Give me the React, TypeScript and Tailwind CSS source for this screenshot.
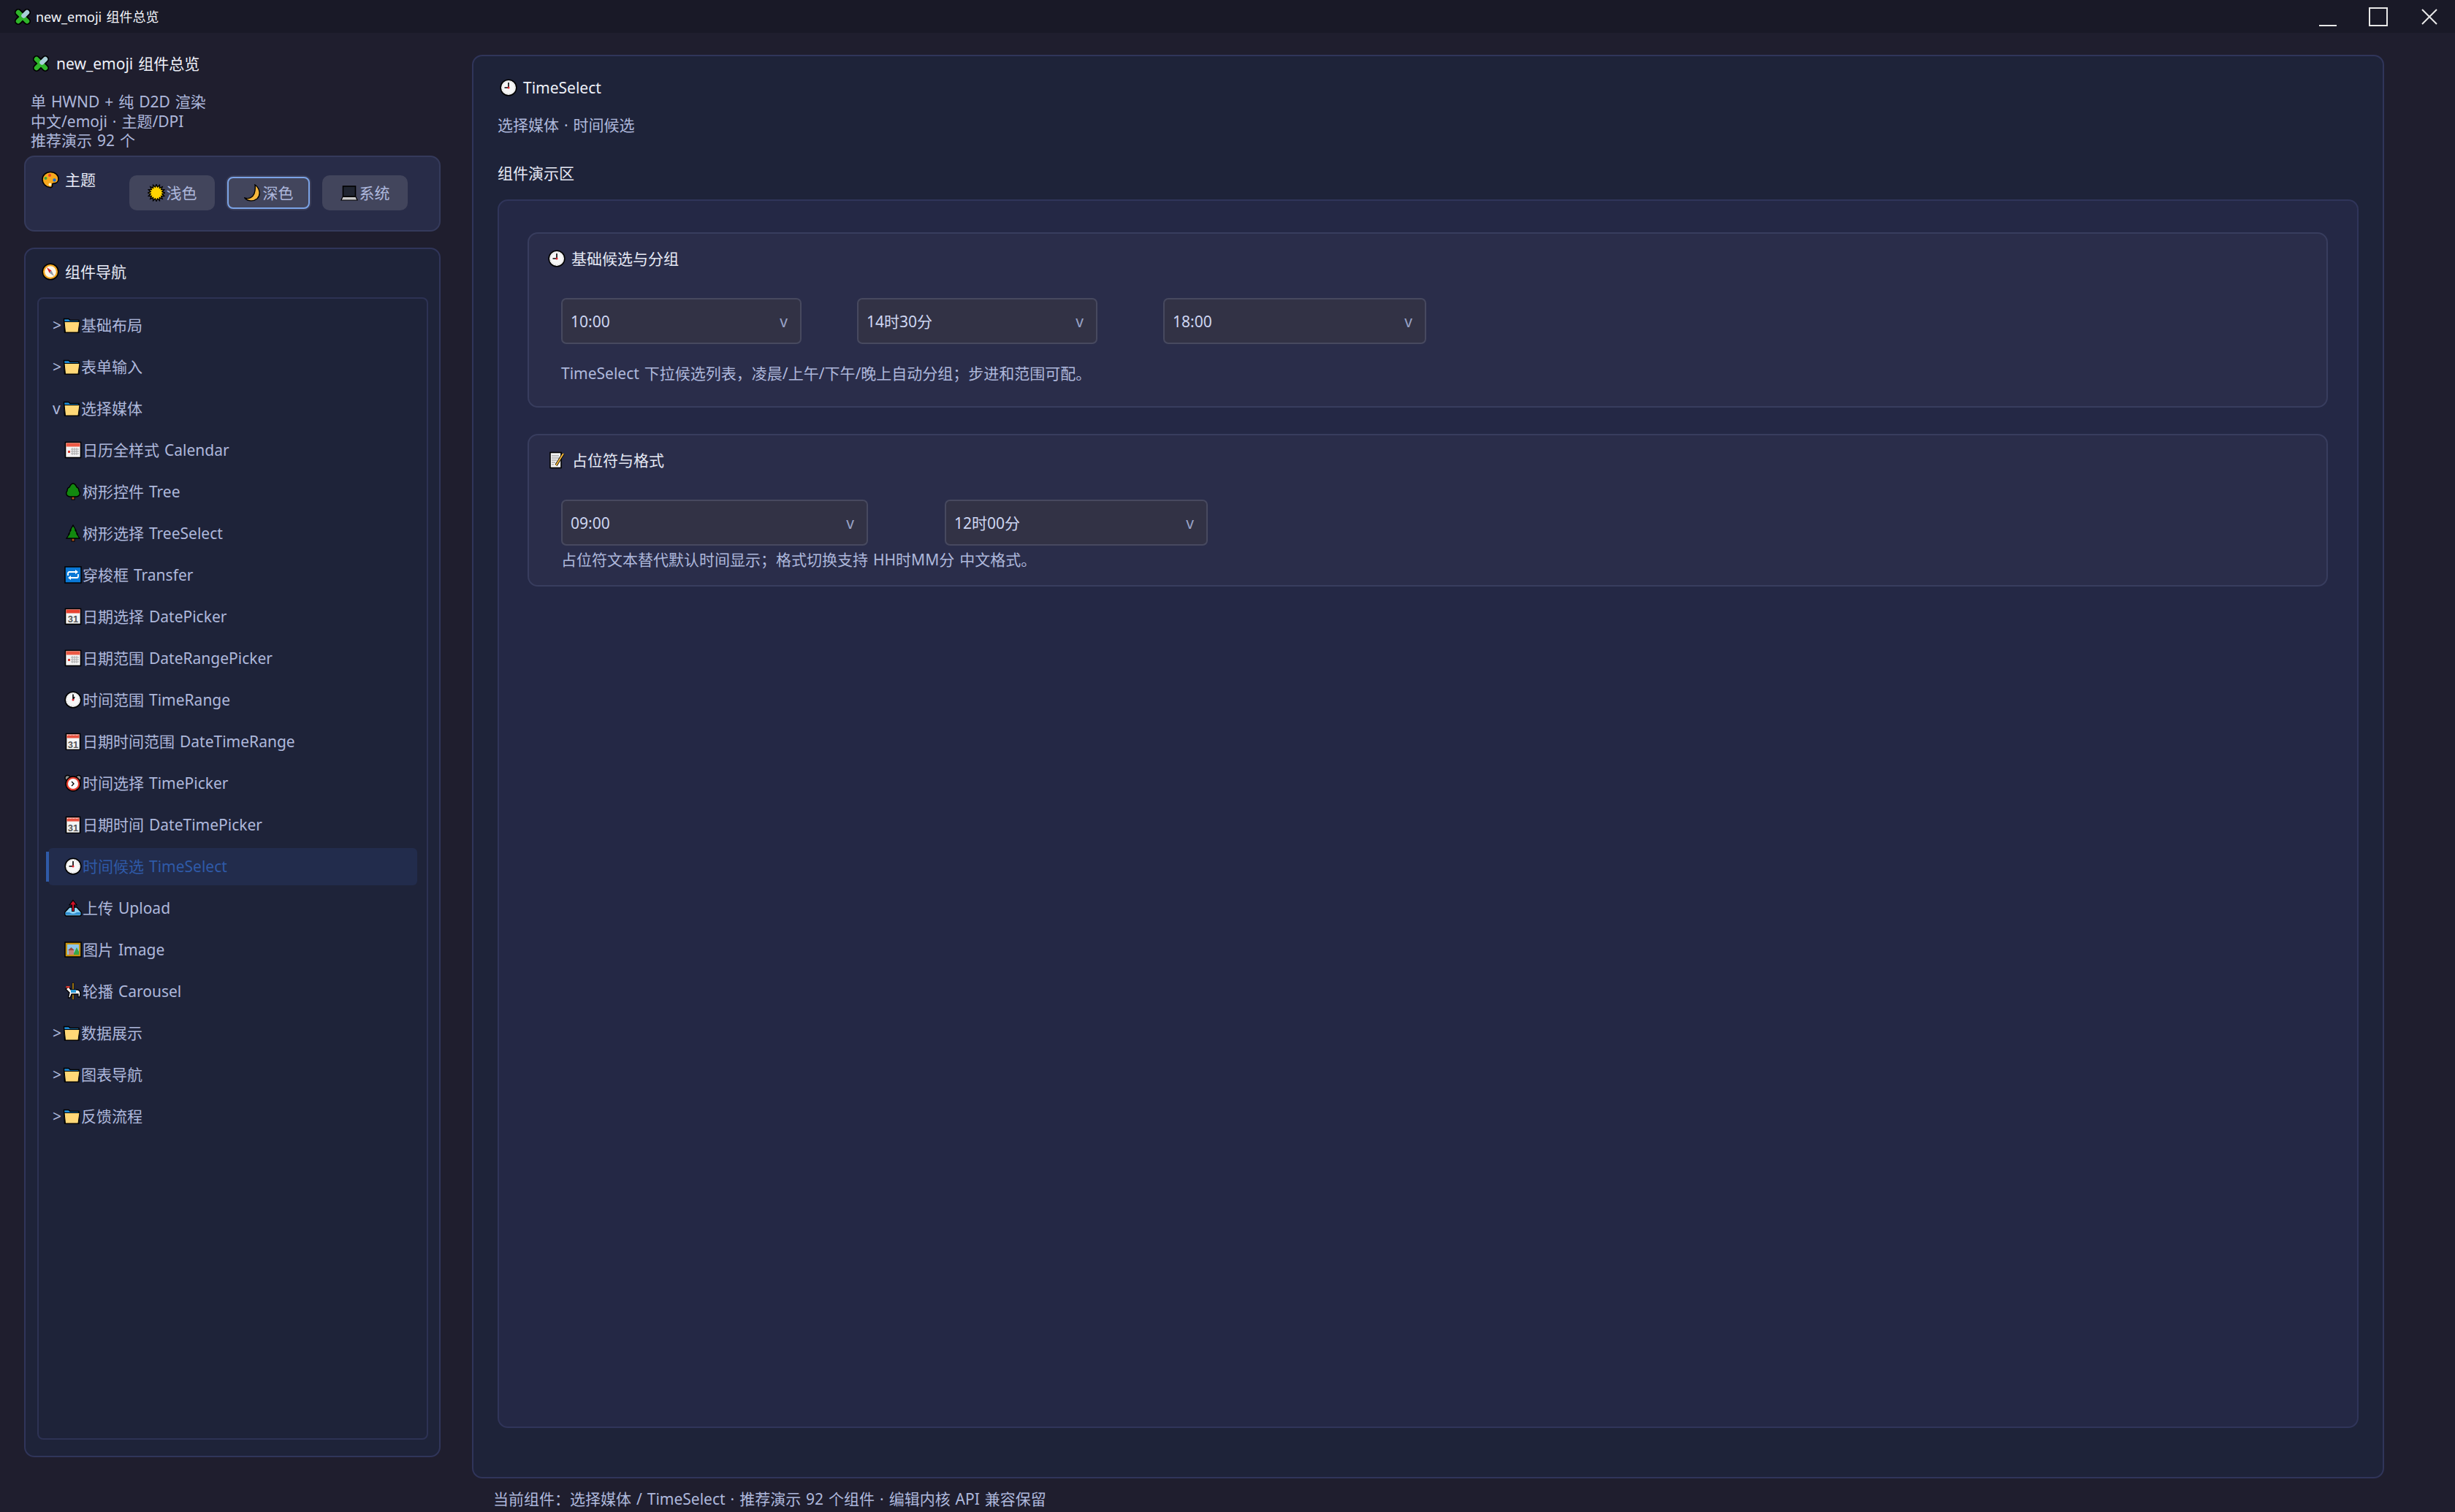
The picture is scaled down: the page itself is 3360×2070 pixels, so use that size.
import type { ReactNode } from "react";

function Svg({ children, className = "w-[24px] h-[24px]" }: { children: ReactNode; className?: string }) {
  return (
    <svg viewBox="0 0 24 24" className={`${className} shrink-0`}>
      {children}
    </svg>
  );
}

function Puzzle() {
  return (
    <Svg>
      <path d="M6 6 L18 18 M6 18 L12 12" stroke="#000" strokeWidth="10" strokeLinecap="round" />
      <path d="M18 6 L12 12" stroke="#000" strokeWidth="10" strokeLinecap="round" />
      <path d="M6 6 L18 18 M6 18 L12 12" stroke="#2fb52a" strokeWidth="6.5" strokeLinecap="round" />
      <path d="M18 6 L13.5 10.5" stroke="#a9cfd8" strokeWidth="6.5" strokeLinecap="round" />
    </Svg>
  );
}

function Palette() {
  return (
    <Svg>
      <path d="M12 1.5 C19 1.5 23 6 23 11 C23 16 19 17 17 17 C15 17 14 18 14.5 20 C15 22 13 23 11 22.5 C5 21.5 1 17 1 11.5 C1 6 6 1.5 12 1.5 Z" fill="#f6a81c" stroke="#000" strokeWidth="1.6" />
      <circle cx="11" cy="6" r="2" fill="#e5432d" />
      <circle cx="5.5" cy="10" r="2" fill="#3aa63a" />
      <circle cx="17.5" cy="12.5" r="2.2" fill="#1a6fd8" />
      <circle cx="11.5" cy="18.5" r="2" fill="#fff2c8" />
    </Svg>
  );
}

function Sun() {
  const points: string[] = [];
  for (let i = 0; i < 32; i++) {
    const r = i % 2 === 0 ? 11.5 : 8;
    const a = (i * Math.PI) / 16;
    points.push(`${12 + r * Math.cos(a)},${12 + r * Math.sin(a)}`);
  }
  return (
    <Svg>
      <polygon points={points.join(" ")} fill="#ffd400" stroke="#000" strokeWidth="1.4" />
    </Svg>
  );
}

function Moon() {
  return (
    <Svg>
      <path d="M15 1 C22 6 23 15 18 20 C13 24 5 24 1 19 C7 21 12 18 14 13 C15.5 9 15.5 5 15 1 Z" fill="#f5b83d" stroke="#000" strokeWidth="1.4" />
    </Svg>
  );
}

function Laptop() {
  return (
    <Svg>
      <rect x="3.5" y="3" width="17" height="14" fill="#1f2430" stroke="#000" strokeWidth="1.6" />
      <path d="M1 22 L3 17.5 H21 L23 22 Z" fill="#c9c9c9" stroke="#000" strokeWidth="1.2" />
    </Svg>
  );
}

function Compass() {
  return (
    <Svg>
      <circle cx="12" cy="12" r="10.8" fill="#f2a51f" stroke="#000" strokeWidth="1.5" />
      <circle cx="12" cy="12" r="7.8" fill="#fdf6e6" />
      <path d="M7 6 L13.5 10.5 L10.5 13.5 Z" fill="#d8232a" />
      <path d="M17 18 L10.5 13.5 L13.5 10.5 Z" fill="#8d97a5" />
    </Svg>
  );
}

function Folder() {
  return (
    <Svg>
      <path d="M1.5 3.5 H8 L10 5.5 H22 V22 H2.5 Z" fill="#1d8bd6" stroke="#000" strokeWidth="1.4" />
      <path d="M2 7.5 H23 L21 22 H3.5 Z" fill="#ffd877" stroke="#000" strokeWidth="1" />
    </Svg>
  );
}

function CalendarGrid() {
  return (
    <Svg>
      <rect x="1.5" y="1.5" width="21" height="21" fill="#f4f4f4" stroke="#000" strokeWidth="1.6" />
      <rect x="2.5" y="2.5" width="19" height="5" fill="#ec5a45" />
      <path d="M9 11 H20 M9 14 H20 M9 17 H20 M11 9 V19 M14 9 V19 M17 9 V19" stroke="#a9a9a9" strokeWidth="1" />
      <rect x="5" y="13" width="3" height="3" fill="#d8372c" />
    </Svg>
  );
}

function Calendar31() {
  return (
    <Svg>
      <rect x="1.5" y="1.5" width="21" height="21" fill="#f4f4f4" stroke="#000" strokeWidth="1.6" />
      <rect x="2.5" y="2.5" width="19" height="5" fill="#e8412f" />
      <text x="12" y="20" textAnchor="middle" fontSize="13" fontWeight="700" fill="#555" fontFamily="Liberation Sans, sans-serif">
        31
      </text>
    </Svg>
  );
}

function CalendarSpiral() {
  return (
    <Svg>
      <rect x="2.5" y="1.5" width="19" height="22" fill="#f4f4f4" stroke="#000" strokeWidth="1.6" />
      <rect x="3.5" y="2.5" width="17" height="5" fill="#e8513f" />
      <path d="M4 3.5 H20" stroke="#fff" strokeWidth="1" strokeDasharray="1 1" />
      <text x="12" y="20.5" textAnchor="middle" fontSize="13" fontWeight="700" fill="#555" fontFamily="Liberation Sans, sans-serif">
        31
      </text>
    </Svg>
  );
}

function Clock({ hand = "left" }: { hand?: "left" | "up" }) {
  return (
    <Svg>
      <circle cx="12" cy="12" r="10.8" fill="#f7f7f7" stroke="#000" strokeWidth="1.6" />
      <circle cx="12" cy="12" r="8.6" fill="none" stroke="#bdbdbd" strokeWidth="1" strokeDasharray="1 2" />
      <path d={hand === "left" ? "M12 5 V12 H6.5" : "M12 4.5 V12 L14 8"} stroke="#000" strokeWidth="1.6" fill="none" />
      <circle cx="12" cy="12" r="1.5" fill="#e0202a" />
    </Svg>
  );
}

function Alarm() {
  return (
    <Svg>
      <circle cx="4.5" cy="5" r="3.5" fill="#8e8e8e" stroke="#000" strokeWidth="1.4" />
      <circle cx="19.5" cy="5" r="3.5" fill="#8e8e8e" stroke="#000" strokeWidth="1.4" />
      <circle cx="12" cy="13" r="10" fill="#e63a2c" stroke="#000" strokeWidth="1.5" />
      <circle cx="12" cy="13" r="7" fill="#fafafa" />
      <path d="M10 10 L13 13 L10 16" stroke="#000" strokeWidth="1.3" fill="none" />
    </Svg>
  );
}

function TreeRound() {
  return (
    <Svg>
      <rect x="10" y="18" width="4" height="5" fill="#b5541c" stroke="#000" strokeWidth="1" />
      <path d="M12 1 C15 1 16 4 17 6 C20 7 20 10 20 11 C22 13 22 18 17 19 H7 C2 18 2 13 4 11 C4 9 4 7 7 6 C8 4 9 1 12 1 Z" fill="#12880f" stroke="#000" strokeWidth="1.4" />
    </Svg>
  );
}

function TreeEvergreen() {
  return (
    <Svg>
      <rect x="10" y="18" width="4" height="5" fill="#b5541c" stroke="#000" strokeWidth="1" />
      <path d="M12 1 L16 8 H15 L18 13 H17 L21 19 H3 L7 13 H6 L9 8 H8 Z" fill="#12880f" stroke="#000" strokeWidth="1.3" />
    </Svg>
  );
}

function Repeat() {
  return (
    <Svg>
      <rect x="1" y="1" width="22" height="22" fill="#0a78d6" stroke="#000" strokeWidth="1.5" />
      <path d="M5 13 V10 C5 8.5 6 8 7 8 H16 M19 11 V14 C19 15.5 18 16 17 16 H8" fill="none" stroke="#fff" strokeWidth="1.8" />
      <path d="M15 5 L19 8 L15 11 Z M9 13 L5 16 L9 19 Z" fill="#fff" />
    </Svg>
  );
}

function Upload() {
  return (
    <Svg>
      <path d="M1 21 V17.5 L7 11 H17 L23 17.5 V21 Q23 23 21 23 H3 Q1 23 1 21 Z" fill="#8fd0f2" stroke="#000" strokeWidth="1.5" />
      <path d="M1.5 18 H7 Q12 22 17 18 H22.5 V21.5 H1.5 Z" fill="#2f8fd0" />
      <path d="M12 17 V7" stroke="#000" strokeWidth="4" />
      <path d="M12 1.5 L17 8 H7 Z" fill="#d1122a" stroke="#000" strokeWidth="1.2" />
      <path d="M12 16 V7" stroke="#d1122a" strokeWidth="2" />
    </Svg>
  );
}

function Picture() {
  return (
    <Svg>
      <rect x="1" y="2" width="22" height="20" fill="#c79412" stroke="#000" strokeWidth="1.5" />
      <rect x="4" y="5" width="16" height="14" fill="#8fc7ea" />
      <path d="M12 19 L17 9 L20 15 V19 Z" fill="#3aa648" />
      <rect x="6" y="13" width="7" height="6" fill="#c9847a" />
      <path d="M5 13 L9.5 9 L14 13 Z" fill="#9c4a3e" />
    </Svg>
  );
}

function Carousel() {
  return (
    <Svg>
      <rect x="11" y="0.5" width="2" height="23" fill="#d29a12" stroke="#000" strokeWidth="0.6" />
      <path d="M2 9 L6 6 L9 10 H17 C20 10 22 12 22 16 L21 20 L19 20 L19 16 H10 L8 21 H5.5 L7 14 L4 11 Z" fill="#fff" stroke="#000" strokeWidth="1.3" />
      <rect x="9" y="10" width="7" height="4" fill="#2b9ad6" />
      <rect x="2.5" y="5" width="5" height="2.5" fill="#d8372c" />
    </Svg>
  );
}

function Memo() {
  return (
    <Svg>
      <rect x="3" y="1.5" width="15" height="21" fill="#f4f4f4" stroke="#000" strokeWidth="1.6" />
      <path d="M5 6 H15 M5 9 H15 M5 12 H12 M5 15 H10 M5 18 H8" stroke="#8a8a8a" strokeWidth="1.2" />
      <path d="M21 3 L11 19" stroke="#000" strokeWidth="3.6" />
      <path d="M21 3 L11 19" stroke="#f5b83d" strokeWidth="2" />
    </Svg>
  );
}

const tree: { icon: ReactNode; label: string; kind: "open" | "closed" | "leaf"; active?: boolean }[] = [
  { icon: <Folder />, label: "基础布局", kind: "closed" },
  { icon: <Folder />, label: "表单输入", kind: "closed" },
  { icon: <Folder />, label: "选择媒体", kind: "open" },
  { icon: <CalendarGrid />, label: "日历全样式 Calendar", kind: "leaf" },
  { icon: <TreeRound />, label: "树形控件 Tree", kind: "leaf" },
  { icon: <TreeEvergreen />, label: "树形选择 TreeSelect", kind: "leaf" },
  { icon: <Repeat />, label: "穿梭框 Transfer", kind: "leaf" },
  { icon: <Calendar31 />, label: "日期选择 DatePicker", kind: "leaf" },
  { icon: <CalendarGrid />, label: "日期范围 DateRangePicker", kind: "leaf" },
  { icon: <Clock hand="up" />, label: "时间范围 TimeRange", kind: "leaf" },
  { icon: <CalendarSpiral />, label: "日期时间范围 DateTimeRange", kind: "leaf" },
  { icon: <Alarm />, label: "时间选择 TimePicker", kind: "leaf" },
  { icon: <CalendarSpiral />, label: "日期时间 DateTimePicker", kind: "leaf" },
  { icon: <Clock />, label: "时间候选 TimeSelect", kind: "leaf", active: true },
  { icon: <Upload />, label: "上传 Upload", kind: "leaf" },
  { icon: <Picture />, label: "图片 Image", kind: "leaf" },
  { icon: <Carousel />, label: "轮播 Carousel", kind: "leaf" },
  { icon: <Folder />, label: "数据展示", kind: "closed" },
  { icon: <Folder />, label: "图表导航", kind: "closed" },
  { icon: <Folder />, label: "反馈流程", kind: "closed" },
];

function TreeRow({ item }: { item: (typeof tree)[number] }) {
  if (item.kind === "leaf") {
    return (
      <div className="h-[57px] py-[3px]">
        <div className={`relative h-[51px] flex items-center pl-[22px] gap-[1px] rounded-[6px] ${item.active ? "bg-[#222c4c] text-[#2f5aa8]" : ""}`}>
          {item.active && <div className="absolute -left-[3px] top-[5px] bottom-[5px] w-[4px] bg-[#2f5aa8]" />}
          {item.icon}
          <span>{item.label}</span>
        </div>
      </div>
    );
  }
  return (
    <div className="h-[57px] flex items-center pl-[6px]">
      <span className="w-[15px]">{item.kind === "open" ? "v" : ">"}</span>
      <span className="flex items-center -ml-[1px] mr-[1px]">{item.icon}</span>
      <span>{item.label}</span>
    </div>
  );
}

function TimeSelectBox({ value, className }: { value: string; className: string }) {
  return (
    <div className={`h-[63px] flex items-center justify-between pl-[11px] pr-[17px] rounded-[7px] border-2 border-[#47495f] bg-[#323245] text-[#ced6f2] ${className}`}>
      <span>{value}</span>
      <span className="text-[#98a2c6]">v</span>
    </div>
  );
}

export default function App() {
  return (
    <div className="w-[3360px] h-[2070px] flex flex-col overflow-hidden bg-[#1f1e2e] font-['Noto_Sans','Noto_Sans_CJK_SC',sans-serif] text-[21px] leading-[26px] [word-spacing:1.5px] text-[#aeb8dc]">
      <div className="h-[45px] shrink-0 flex items-center justify-between bg-[#191927] pl-[19px] pr-[24px]">
        <div className="flex items-center gap-[6px] text-[18px] text-[#f2f4fa]">
          <Puzzle />
          <span>new_emoji 组件总览</span>
        </div>
        <div className="flex items-center gap-[44px]">
          <svg viewBox="0 0 24 24" className="w-[24px] h-[24px] mt-[10px]">
            <path d="M0 19 H24" stroke="#e8e8e8" strokeWidth="2" />
          </svg>
          <svg viewBox="0 0 26 26" className="w-[26px] h-[26px]">
            <rect x="1" y="1" width="24" height="24" fill="none" stroke="#e8e8e8" strokeWidth="2" />
          </svg>
          <svg viewBox="0 0 22 22" className="w-[22px] h-[22px] ml-[2px]">
            <path d="M1 1 L21 21 M21 1 L1 21" stroke="#e8e8e8" strokeWidth="2" />
          </svg>
        </div>
      </div>

      <div className="flex-1 min-h-0 flex">
        <aside className="w-[570px] ml-[33px] shrink-0 flex flex-col pt-[29px] pb-[75px]">
          <div className="flex items-center gap-[9px] pl-[11px] text-[#eef0f8]">
            <Puzzle />
            <span>new_emoji 组件总览</span>
          </div>
          <div className="mt-[26px] pl-[9px] leading-[26.6px]">
            <p>单 HWND + 纯 D2D 渲染</p>
            <p>中文/emoji · 主题/DPI</p>
            <p>推荐演示 92 个</p>
          </div>
          <div className="mt-[7px] h-[104px] shrink-0 flex items-start rounded-[14px] border-2 border-[#353a5b] bg-[#282c48] pl-[22px]">
            <div className="w-[120px] mt-[18px] flex items-center gap-[8px] text-[#e6e9f5]">
              <Palette />
              <span>主题</span>
            </div>
            <div className="mt-[25px] flex gap-[15px]">
              <div className="w-[117px] h-[48px] flex items-center justify-center gap-[2px] rounded-[10px] bg-[#42455c]">
                <Sun />
                <span>浅色</span>
              </div>
              <div className="w-[117px] h-[48px] rounded-[10px] bg-[#3a3d57] p-[2px]">
                <div className="h-full flex items-center justify-center gap-[2px] rounded-[8px] border-2 border-[#7ba3e6] bg-[#42455c]">
                  <Moon />
                  <span>深色</span>
                </div>
              </div>
              <div className="w-[117px] h-[48px] flex items-center justify-center gap-[2px] rounded-[10px] bg-[#42455c]">
                <Laptop />
                <span>系统</span>
              </div>
            </div>
          </div>

          <div className="mt-[22px] flex-1 min-h-0 flex flex-col rounded-[14px] border-2 border-[#30355a] bg-[#1e2339] pl-[16px] pr-[15px] pb-[22px]">
            <div className="mt-[18px] ml-[6px] flex items-center gap-[8px] text-[#e6e9f5]">
              <Compass />
              <span>组件导航</span>
            </div>
            <div className="mt-[22px] flex-1 rounded-[8px] border-2 border-[#2d3254] px-[13px] pt-[8px]">
              {tree.map((item) => (
                <TreeRow key={item.label} item={item} />
              ))}
            </div>
          </div>
        </aside>

        <div className="ml-[43px] w-[2617px] shrink-0 flex flex-col">
          <main className="mt-[30px] flex-1 min-h-0 flex flex-col rounded-[14px] border-2 border-[#30355a] bg-[#1e2339] pl-[33px] pr-[33px] pt-[30px] pb-[67px]">
            <div className="ml-[3px] flex items-center gap-[8px] text-[#eef0f8]">
              <Clock />
              <span>TimeSelect</span>
            </div>
            <p className="mt-[25px]">选择媒体 · 时间候选</p>
            <p className="mt-[40px] text-[#e6e9f5]">组件演示区</p>
            <section className="mt-[23px] flex-1 min-h-0 rounded-[14px] border-2 border-[#30355a] bg-[#242845] pl-[39px] pr-[40px] pt-[43px]">
              <div className="h-[240px] rounded-[14px] border-2 border-[#383d5e] bg-[#2a2d4a] pl-[26px] pt-[21px]">
                <div className="flex items-center gap-[8px] text-[#e6e9f5]">
                  <Clock />
                  <span>基础候选与分组</span>
                </div>
                <div className="mt-[41px] ml-[18px] flex">
                  <TimeSelectBox value="10:00" className="w-[329px]" />
                  <TimeSelectBox value="14时30分" className="w-[329px] ml-[76px]" />
                  <TimeSelectBox value="18:00" className="w-[360px] ml-[90px]" />
                </div>
                <p className="mt-[27px] ml-[18px]">TimeSelect 下拉候选列表，凌晨/上午/下午/晚上自动分组；步进和范围可配。</p>
              </div>
              <div className="mt-[36px] h-[209px] rounded-[14px] border-2 border-[#383d5e] bg-[#2a2d4a] pl-[26px] pt-[21px]">
                <div className="flex items-center gap-[9px] text-[#e6e9f5]">
                  <Memo />
                  <span>占位符与格式</span>
                </div>
                <div className="mt-[41px] ml-[18px] flex">
                  <TimeSelectBox value="09:00" className="w-[420px]" />
                  <TimeSelectBox value="12时00分" className="w-[360px] ml-[105px]" />
                </div>
                <p className="mt-[6px] ml-[18px]">占位符文本替代默认时间显示；格式切换支持 HH时MM分 中文格式。</p>
              </div>
            </section>
          </main>
          <p className="h-[46px] shrink-0 pl-[29px] pt-[15px]">当前组件：选择媒体 / TimeSelect · 推荐演示 92 个组件 · 编辑内核 API 兼容保留</p>
        </div>
      </div>
    </div>
  );
}
